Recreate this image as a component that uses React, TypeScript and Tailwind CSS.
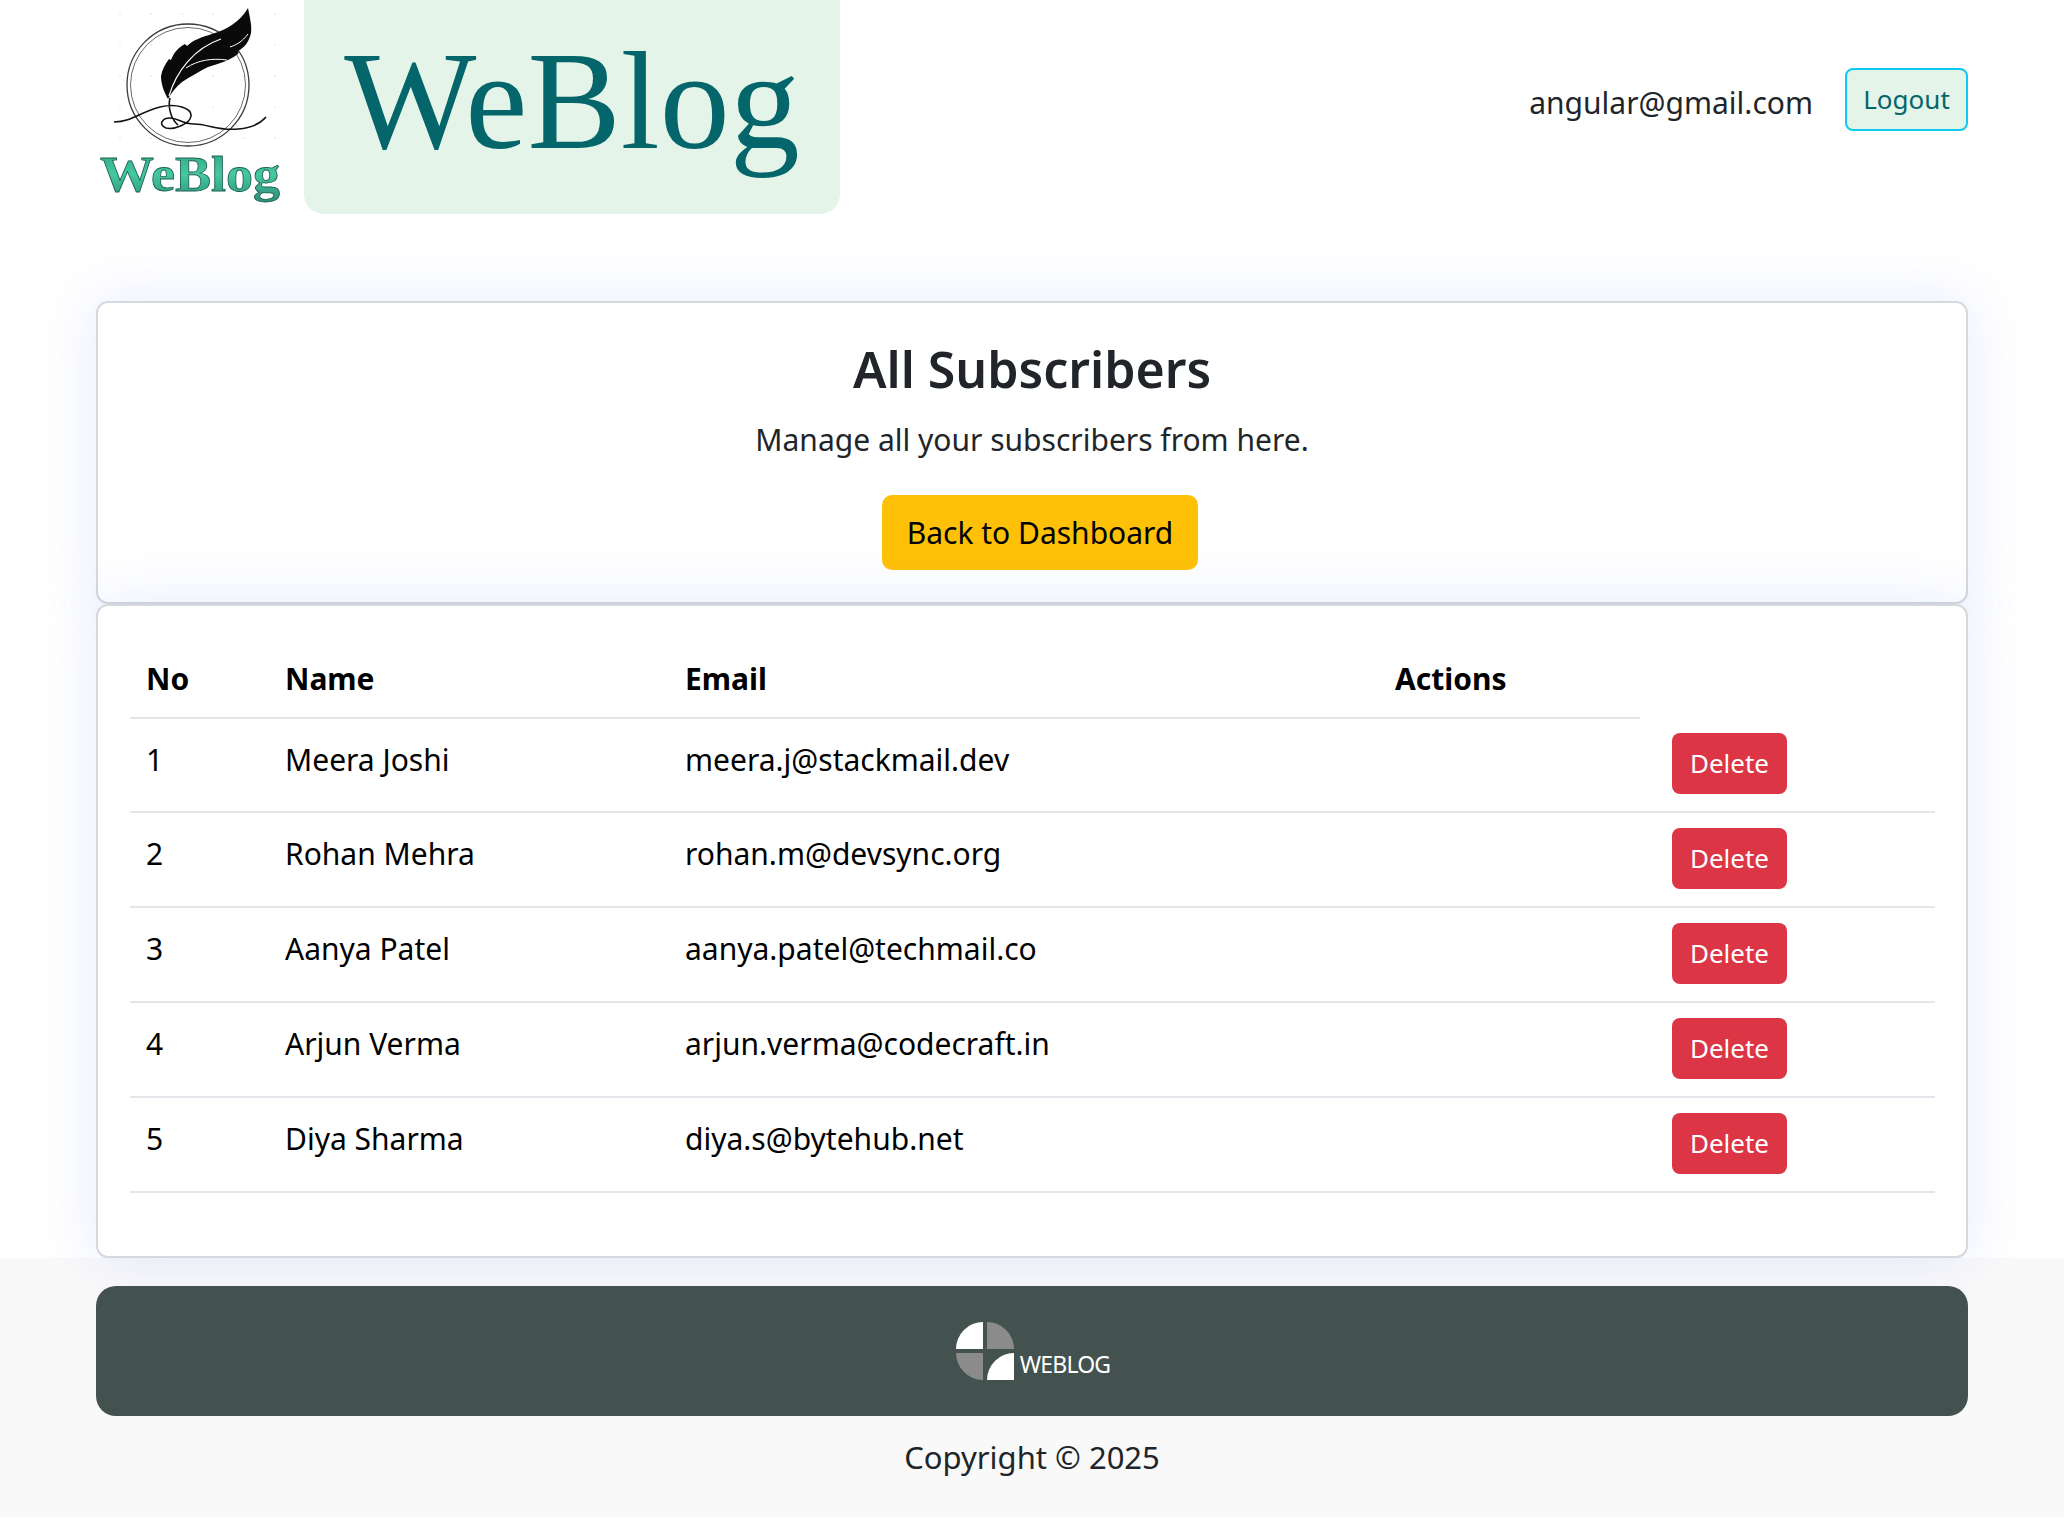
// Subscribers admin page
const font = { fontFamily: '"Noto Sans", sans-serif' };

const subscribers = [
  { no: 1, name: 'Meera Joshi', email: 'meera.j@stackmail.dev' },
  { no: 2, name: 'Rohan Mehra', email: 'rohan.m@devsync.org' },
  { no: 3, name: 'Aanya Patel', email: 'aanya.patel@techmail.co' },
  { no: 4, name: 'Arjun Verma', email: 'arjun.verma@codecraft.in' },
  { no: 5, name: 'Diya Sharma', email: 'diya.s@bytehub.net' },
];

function FeatherLogo() {
  const dots: [number, number][] = [];
  for (const x of [30, 61, 92, 123, 154, 185]) {
    for (const y of [14, 45, 76, 107, 138]) dots.push([x, y]);
  }
  return (
    <svg viewBox="6 0 192 214" className="w-[192px] h-[214px] shrink-0">
      <defs>
        <linearGradient id="wb" x1="0" y1="0" x2="0" y2="1">
          <stop offset="0" stopColor="#2f9f80" />
          <stop offset="0.5" stopColor="#45c9a0" />
          <stop offset="1" stopColor="#2c8f78" />
        </linearGradient>
      </defs>
      {dots.map(([x, y]) => (
        <circle key={`${x}-${y}`} cx={x} cy={y} r="0.8" fill="#dcdcdc" />
      ))}
      <circle cx="98" cy="85" r="61" fill="none" stroke="#3a3a3a" strokeWidth="1.3" />
      <circle cx="98" cy="85" r="57.5" fill="none" stroke="#6a6a6a" strokeWidth="1" />
      <path
        d="M158 8 C160 18 162 26 161 33 C159 42 155 47 148 51 C150 52 148 55 140 59 C132 63 124 65 118 67 C110 71 100 77 92 82 C86 87 82 92 78 99 C74 92 71 84 71 76 C72 70 75 64 79 59 L81 60 C84 52 89 47 95 44 L97 46 C103 40 112 37 122 34 C136 30 150 22 158 8 Z"
        fill="#0a0a0a"
      />
      <path d="M79 96 C86 72 104 48 131 39" fill="none" stroke="#fff" strokeWidth="1.2" />
      <path d="M96 68 C108 60 122 58 137 60" fill="none" stroke="#fff" strokeWidth="1" />
      <path d="M140 47 C146 45 152 42 158 34" fill="none" stroke="#fff" strokeWidth="1" />
      <path
        d="M24 122 C42 122 50 112 70 107 C86 103 102 108 101 116 C100 124 84 130 76 128 C68 125 72 118 80 118 C88 118 92 124 104 124 C118 124 128 131 148 129 C160 128 170 124 176 117 M80 98 C78 106 80 118 88 125"
        fill="none"
        stroke="#111"
        strokeWidth="1.6"
      />
      <text
        x="10"
        y="191"
        textLength="180"
        lengthAdjust="spacingAndGlyphs"
        fill="url(#wb)"
        stroke="#1d5f50"
        strokeWidth="0.8"
        style={{ fontFamily: '"Liberation Serif", serif', fontSize: 50, fontWeight: 700 }}
      >
        WeBlog
      </text>
    </svg>
  );
}

function FooterMark() {
  return (
    <svg viewBox="0 0 58 58" className="w-[58px] h-[58px]">
      <path d="M27 0 V27 H0 A27 27 0 0 1 27 0 Z" fill="#ffffff" />
      <path d="M31 0 A27 27 0 0 1 58 27 H31 Z" fill="#8b8b8b" />
      <path d="M0 31 H27 V58 A27 27 0 0 1 0 31 Z" fill="#8b8b8b" />
      <path d="M58 31 V58 H31 A27 27 0 0 1 58 31 Z" fill="#ffffff" />
    </svg>
  );
}

export default function App() {
  return (
    <div style={font} className="bg-white text-[24px] text-[#212529]">
      {/* Header */}
      <header className="px-[96px] h-[301px] flex items-start">
        <FeatherLogo />
        <div className="ml-[16px] w-[536px] h-[214px] bg-[#e4f4e9] rounded-b-[20px] flex items-center justify-center">
          <span
            className="text-[#04666a] text-[140px] leading-none -mt-[12px]"
            style={{ fontFamily: '"Liberation Serif", serif' }}
          >
            WeBlog
          </span>
        </div>
        <div className="ml-auto mt-[68px] flex items-center gap-[32px]">
          <span className="text-[#212529] text-[30px] mt-[5px]">angular@gmail.com</span>
          <button className="w-[123px] h-[63px] rounded-[8px] border-2 border-[#0dcaf0] bg-[#e4f4e9] text-[#04666a] text-[26px]">
            Logout
          </button>
        </div>
      </header>

      <main className="px-[96px]">
        {/* Title card */}
        <section className="h-[303px] bg-white border-2 border-[#d6d8dd] rounded-[12px] shadow-[0_0_60px_rgba(70,100,255,0.13)] flex flex-col items-center pt-[36px]">
          <h1 className="text-[50px] leading-[60px] font-semibold">All Subscribers</h1>
          <p className="mt-[20px] text-[30px] leading-[42px]">Manage all your subscribers from here.</p>
          <button className="mt-[34px] ml-[16px] w-[316px] h-[75px] rounded-[10px] bg-[#ffc107] text-black text-[30px]">
            Back to Dashboard
          </button>
        </section>

        {/* Table card */}
        <section className="relative h-[654px] bg-white border-2 border-[#d6d8dd] rounded-[12px] shadow-[0_0_60px_rgba(70,100,255,0.13)] px-[32px] pt-[43px]">
          <table className="w-full table-fixed border-collapse text-[30px] text-black">
            <colgroup>
              <col className="w-[139px]" />
              <col className="w-[400px]" />
              <col className="w-[710px]" />
              <col className="w-[261px]" />
              <col className="w-[295px]" />
            </colgroup>
            <thead>
              <tr>
                <th className="px-4 pt-3 pb-5 text-left font-bold leading-9 border-b-2 border-[#e3e6ea]">No</th>
                <th className="px-4 pt-3 pb-5 text-left font-bold leading-9 border-b-2 border-[#e3e6ea]">Name</th>
                <th className="px-4 pt-3 pb-5 text-left font-bold leading-9 border-b-2 border-[#e3e6ea]">Email</th>
                <th className="px-4 pt-3 pb-5 text-left font-bold leading-9 border-b-2 border-[#e3e6ea]">Actions</th>
              </tr>
            </thead>
            <tbody>
              {subscribers.map((s) => (
                <tr key={s.no} className="border-b-2 border-[#e3e6ea]">
                  <td className="px-4 pt-[23px] align-top leading-9">{s.no}</td>
                  <td className="px-4 pt-[23px] align-top leading-9">{s.name}</td>
                  <td className="px-4 pt-[23px] align-top leading-9">{s.email}</td>
                  <td className="px-4 pt-[23px] align-top leading-9"></td>
                  <td className="pl-[32px] pt-[15px] pb-[17px] align-top">
                    <button className="block w-[115px] h-[61px] rounded-[8px] bg-[#dc3545] text-white text-[26px]">
                      Delete
                    </button>
                  </td>
                </tr>
              ))}
            </tbody>
          </table>
        </section>
      </main>

      {/* Footer */}
      <footer className="bg-[#f9f9f9] h-[259px] px-[96px] pt-[28px] flex flex-col">
        <div className="relative h-[130px] rounded-[20px] bg-[#43524f] flex items-end justify-center gap-[6px] pb-[36px] pl-[2px]">
          <FooterMark />
          <span className="text-white text-[23px] leading-[24px] mb-[4px] tracking-[-0.8px]">WEBLOG</span>
        </div>
        <p className="mt-[23px] text-center text-[31px] leading-[36px]">Copyright © 2025</p>
      </footer>
      <div className="h-[23px]" />
    </div>
  );
}
